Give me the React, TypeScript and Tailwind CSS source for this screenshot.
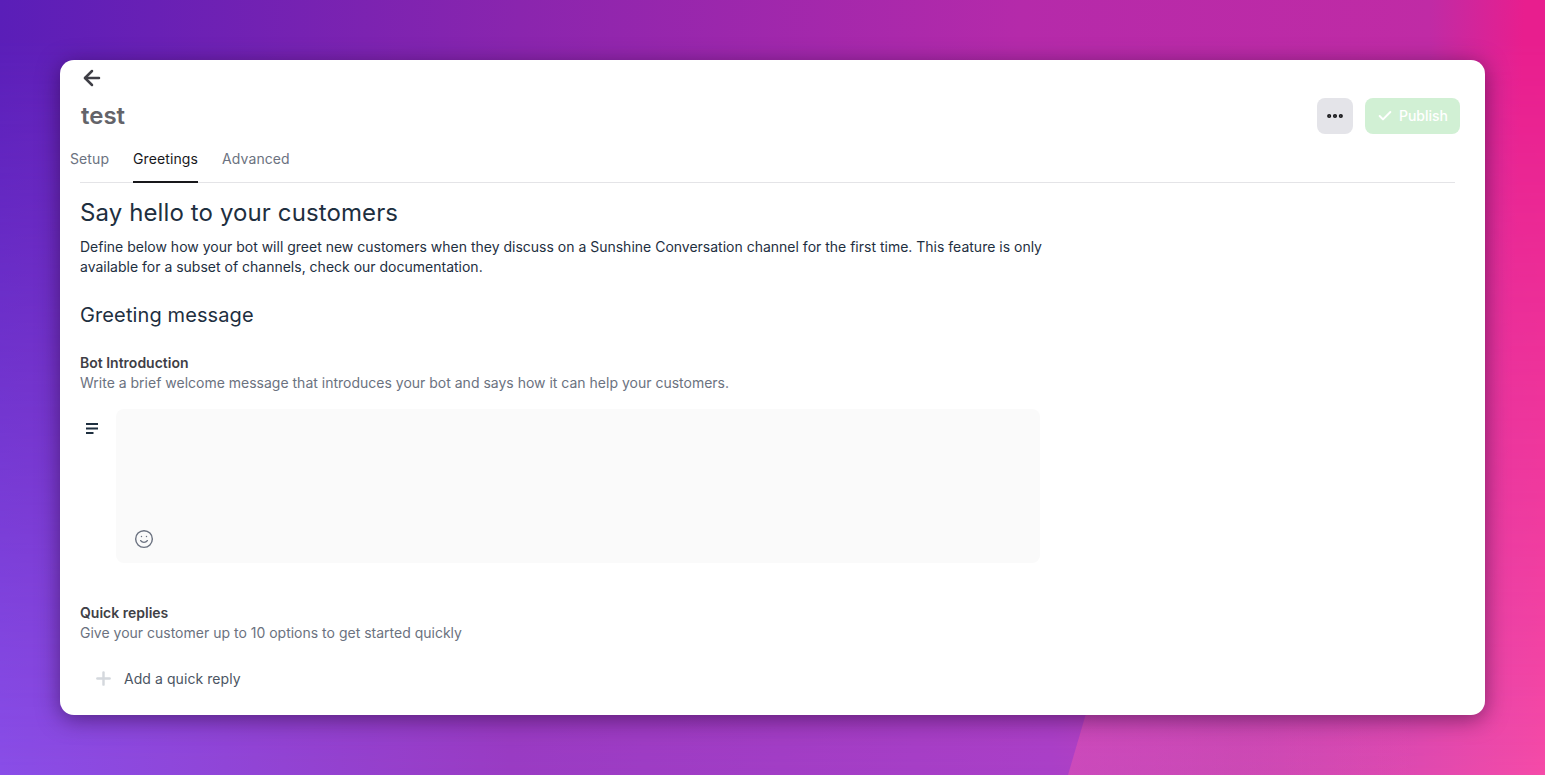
import { ArrowLeft, Check, MoreHorizontal, Plus, Smile } from 'lucide-react';

export default function App() {
  return (
    <div className="relative h-[775px] w-full overflow-hidden bg-[linear-gradient(90deg,#8a4ee8_0%,#9a3cc4_33%,#aa40c8_68%,#c046b8_80%,#e04ab0_92%,#f54ba8_100%)] font-['Inter',sans-serif]">
      {/* Background shapes */}
      <div className="absolute inset-0 bg-[linear-gradient(92deg,#5a1eb8_0%,#8a25ae_33%,#b52aaa_65%,#c02ba5_91%,#e81e8e_97%,#e81e8e_100%)] [mask-image:linear-gradient(to_bottom,black_5%,transparent_100%)]" />
      <div className="absolute inset-0 bg-[linear-gradient(90deg,rgba(255,90,170,0.38)_69%,rgba(255,90,170,0)_92%)] [clip-path:polygon(1068px_775px,1090px_700px,1545px_700px,1545px_775px)]" />

      <div className="absolute left-[60px] top-[60px] flex h-[655px] w-[1425px] flex-col rounded-[14px] bg-white pl-5 pr-[30px] shadow-[0_4px_22px_rgba(30,0,40,0.5)]">
        {/* Header */}
        <ArrowLeft className="mt-[6px] h-6 w-6 text-[#3f3f46]" strokeWidth={2.5} />
        <div className="mt-[2px] flex h-[48px] items-center justify-between">
          <h1 className="ml-[1px] text-[24px] font-semibold leading-8 text-[#636369]">test</h1>
          <div className="mr-[-5px] flex items-center gap-3">
            <button className="flex h-9 w-9 items-center justify-center rounded-lg bg-[#e4e4e9]">
              <MoreHorizontal className="h-5 w-5 text-[#18181b]" strokeWidth={3} />
            </button>
            <button className="flex h-9 w-[95px] items-center justify-center gap-[6px] rounded-lg bg-[#d1f0d4] text-sm font-medium text-white">
              <Check className="h-4 w-4" strokeWidth={3} />
              Publish
            </button>
          </div>
        </div>

        {/* Tabs */}
        <div className="flex h-[43px] gap-6 border-b border-[#e4e4e7] text-sm tracking-[0.1px]">
          <span className="ml-[-10px] pt-[9px] text-[#6b7280]">Setup</span>
          <span className="relative pt-[9px] text-[#18181b]">
            Greetings
            <span className="absolute inset-x-0 bottom-[-1px] h-[2px] bg-[#18181b]" />
          </span>
          <span className="pt-[9px] text-[#6b7280]">Advanced</span>
        </div>

        {/* Content */}
        <h2 className="mt-[14px] text-2xl leading-8 tracking-[0.11px] text-[#1e2f3f]">Say hello to your customers</h2>
        <p className="mt-[8px] w-[980px] text-sm leading-5 text-[#1e2f3f]">
          Define below how your bot will greet new customers when they discuss on a Sunshine Conversation channel for the first time. This feature is only available for a subset of channels, check our documentation.
        </p>
        <h3 className="mt-[24px] text-xl leading-7 tracking-[0.11px] text-[#1e2f3f]">Greeting message</h3>

        <div className="mt-[24px] text-sm font-semibold leading-5 text-[#3f3f46]">Bot Introduction</div>
        <div className="text-sm leading-5 text-[#6b7280]">
          Write a brief welcome message that introduces your bot and says how it can help your customers.
        </div>

        <div className="mt-4 flex">
          <svg className="ml-[6px] mt-[15px] h-[11px] w-[12px] translate-y-[-1px]" viewBox="0 0 12 11" fill="#1e2f3f">
            <rect x="0" y="0" width="12" height="2" />
            <rect x="0" y="4.5" width="12" height="2" />
            <rect x="0" y="9" width="7.5" height="2" />
          </svg>
          <div className="ml-[18px] flex h-[154px] w-[924px] items-end rounded-lg bg-[#fafafa] pb-[14px] pl-[18px]">
            <Smile className="h-5 w-5 text-[#6b7280]" strokeWidth={1.7} />
          </div>
        </div>

        <div className="mt-10 text-sm font-semibold leading-5 text-[#3f3f46]">Quick replies</div>
        <div className="text-sm leading-5 text-[#6b7280]">Give your customer up to 10 options to get started quickly</div>
        <div className="ml-[13px] mt-[25px] flex items-center gap-[10px] text-sm leading-5 tracking-[0.07px] text-[#4b5563]">
          <Plus className="h-[21px] w-[21px] text-[#d4d8dd]" strokeWidth={2.8} />
          Add a quick reply
        </div>
      </div>
    </div>
  );
}
